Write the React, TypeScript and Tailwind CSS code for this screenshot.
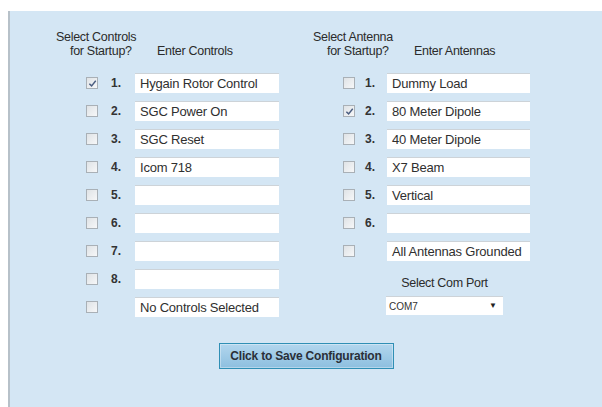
const controls = ['Hygain Rotor Control', 'SGC Power On', 'SGC Reset', 'Icom 718', '', '', '', ''];
const antennas = ['Dummy Load', '80 Meter Dipole', '40 Meter Dipole', 'X7 Beam', 'Vertical', ''];

function CheckBox({ checked }: { checked?: boolean }) {
  return (
    <div className="w-3 h-3 border border-[#a9b0b6] bg-gradient-to-br from-[#dfe3e6] to-[#f6f7f8] flex items-center justify-center">
      {checked && (
        <svg viewBox="0 0 10 10" className="w-[9px] h-[9px]">
          <path d="M1.5 5.2 L4 7.6 L8.6 2" fill="none" stroke="#4a5d80" strokeWidth={1.6} />
        </svg>
      )}
    </div>
  );
}

function Field({ value, w }: { value: string; w: string }) {
  return (
    <div className={`${w} h-5 bg-white border-t border-[#cdd3d8] pl-[5px] flex items-center text-[13px] text-[#2f2f2f] tracking-[-0.2px] whitespace-nowrap`}>
      {value}
    </div>
  );
}

function Row({ checked, num, value, numCls, w }: { checked?: boolean; num: string; value: string; numCls: string; w: string }) {
  return (
    <div className="flex items-center h-5 pl-[30px]">
      <CheckBox checked={checked} />
      <div className={`${numCls} text-[12px] font-bold text-[#333] leading-none`}>{num}</div>
      <Field value={value} w={w} />
    </div>
  );
}

function Header({ top, right }: { top: string; right: string }) {
  return (
    <div className="text-[12.5px] leading-[14px] text-[#2b2b2b] tracking-[-0.3px]">
      <div>{top}</div>
      <div className="flex">
        <span className="pl-[14px] w-[101px]">for Startup?</span>
        <span>{right}</span>
      </div>
    </div>
  );
}

export default function App() {
  return (
    <div className="w-[602px] h-[407px] bg-white pt-[11px] pl-[8px] overflow-hidden" style={{ fontFamily: '"Liberation Sans", Arial, sans-serif' }}>
      <div className="h-full border-l-2 border-[#b7c1c9] bg-[#d4e6f4] flex flex-col">
        <div className="flex pl-[46px] pt-[19px]">
          {/* controls column */}
          <div className="w-[257px]">
            <Header top="Select Controls" right="Enter Controls" />
            <div className="mt-[15px] flex flex-col gap-2">
              {controls.map((c, i) => (
                <Row key={i} checked={i === 0} num={`${i + 1}.`} value={c} numCls="w-[37px] pl-[13px]" w="w-[144px]" />
              ))}
              <Row num="" value="No Controls Selected" numCls="w-[37px] pl-[13px]" w="w-[144px]" />
            </div>
          </div>

          {/* antennas column */}
          <div className="flex-1">
            <Header top="Select Antenna" right="Enter Antennas" />
            <div className="mt-[15px] flex flex-col gap-2">
              {antennas.map((a, i) => (
                <Row key={i} checked={i === 1} num={`${i + 1}.`} value={a} numCls="w-[32px] pl-[10px]" w="w-[143px]" />
              ))}
              <Row num="" value="All Antennas Grounded" numCls="w-[32px] pl-[10px]" w="w-[143px]" />
            </div>
            <div className="ml-[73px] w-[117px] mt-[15px] flex flex-col items-center">
              <div className="text-[12.5px] leading-[14px] text-[#2b2b2b] tracking-[-0.3px]">Select Com Port</div>
              <div className="mt-[6px] w-full h-[19px] bg-white border-t border-[#cdd3d8] flex items-center justify-between pl-[3px] pr-[6px]">
                <span className="text-[10px] text-[#333]">COM7</span>
                <span className="text-[8px] text-[#222]">▼</span>
              </div>
            </div>
          </div>
        </div>

        <div className="flex justify-center mt-[26px]">
          <button className="w-[175px] h-[26px] border border-[#2f8fb5] bg-gradient-to-b from-[#b2d6ee] to-[#8dbfdf] text-[12px] font-bold text-[#2a2f38] tracking-[-0.2px] shadow-[inset_0_0_0_1px_rgba(255,255,255,0.35)]">
            Click to Save Configuration
          </button>
        </div>
      </div>
    </div>
  );
}
